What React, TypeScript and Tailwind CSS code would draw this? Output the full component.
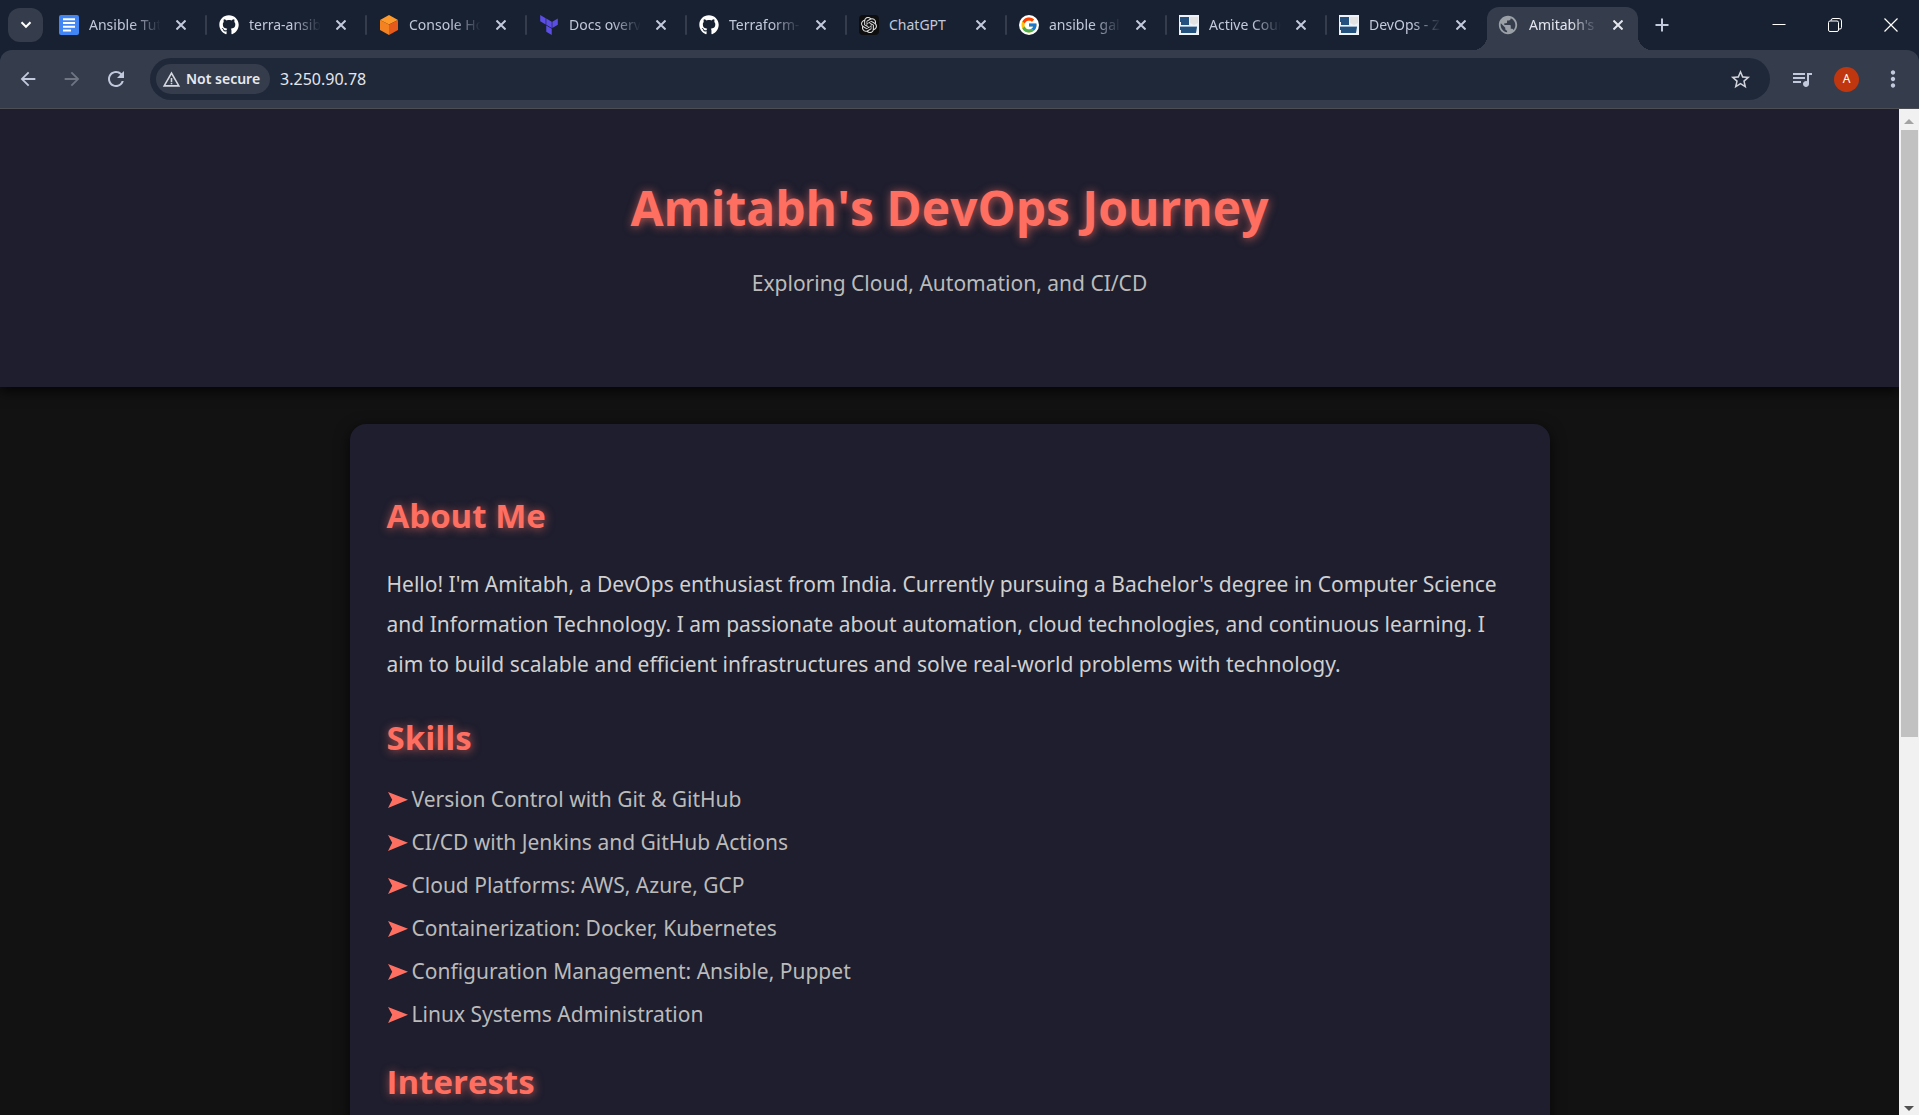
import type { ReactNode } from "react";
import { FaGithub } from "react-icons/fa";
import { FcGoogle } from "react-icons/fc";
import {
  MdArrowBack,
  MdArrowForward,
  MdMoreVert,
  MdPublic,
  MdQueueMusic,
  MdRefresh,
  MdStarBorder,
  MdWarningAmber,
} from "react-icons/md";
import { SiOpenai, SiTerraform } from "react-icons/si";

function DocsIcon() {
  return (
    <svg viewBox="0 0 20 20" className="size-5">
      <rect width="20" height="20" rx="2" fill="#4285f4" />
      <path d="M4 4.2h12M4 8h12M4 11.8h12M4 15.6h8" stroke="#fff" strokeWidth="2" />
    </svg>
  );
}

function ConsoleIcon() {
  return (
    <svg viewBox="0 0 20 20" className="size-5">
      <path d="M10 0l9 5-9 4.6L1 5z" fill="#fd9a2b" />
      <path d="M1 5l9 4.6V20l-9-5z" fill="#f58220" />
      <path d="M19 5l-9 4.6V20l9-5z" fill="#e65a1c" />
    </svg>
  );
}

function CourseIcon() {
  return (
    <svg viewBox="0 0 20 20" className="size-5">
      <rect width="20" height="20" fill="#eef2f6" />
      <path d="M1 2h9v8H2V7H1z" fill="#23507c" />
      <path d="M1 12h17l-1 6H2v-3H1z" fill="#23507c" />
      <path d="M11 2h8v6l-4 2-4-2z" fill="#e2e2e2" />
      <path d="M1 11h17v1H1z" fill="#9db4ca" />
    </svg>
  );
}

function CloseIcon() {
  return (
    <svg viewBox="0 0 10 10" className="size-2.5" fill="none" stroke="currentColor" strokeWidth="2">
      <path d="M0.5 0.5l9 9M9.5 0.5l-9 9" />
    </svg>
  );
}

const tabs: { title: string; icon: ReactNode }[] = [
  { title: "Ansible Tutorial", icon: <DocsIcon /> },
  { title: "terra-ansible", icon: <FaGithub className="size-5 text-white" /> },
  { title: "Console Home", icon: <ConsoleIcon /> },
  { title: "Docs overview", icon: <SiTerraform className="size-5 text-[#5c4ee5]" /> },
  { title: "Terraform-files", icon: <FaGithub className="size-5 text-white" /> },
  {
    title: "ChatGPT",
    icon: (
      <span className="flex size-5 items-center justify-center rounded bg-[#0e0e0e]">
        <SiOpenai className="size-4 text-[#dedede]" />
      </span>
    ),
  },
  {
    title: "ansible galaxy",
    icon: (
      <span className="flex size-5 items-center justify-center rounded-full bg-white">
        <FcGoogle className="size-[18px]" />
      </span>
    ),
  },
  { title: "Active Courses", icon: <CourseIcon /> },
  { title: "DevOps - Zero", icon: <CourseIcon /> },
];

const fade = "[mask-image:linear-gradient(to_right,black_60%,transparent)]";

function TabBody({ title, icon }: { title: string; icon: ReactNode }) {
  return (
    <>
      <button className="flex min-w-0 flex-1 items-center gap-2.5 text-left">
        <span className="shrink-0">{icon}</span>
        <span
          className={`min-w-0 flex-1 overflow-hidden text-sm whitespace-nowrap ${
            title === "ChatGPT" ? "" : fade
          }`}
        >
          {title}
        </span>
      </button>
      <button aria-label={`Close ${title}`} className="ml-2 flex size-6 items-center justify-center">
        <CloseIcon />
      </button>
    </>
  );
}

function TabStrip() {
  return (
    <div className="flex h-[50px] items-stretch bg-[#182131] pl-2 text-[#c3c9dc]">
      <button
        aria-label="Search tabs"
        className="mt-2 mr-1 flex h-[34px] w-[35px] shrink-0 items-center justify-center rounded-xl bg-[#353d4c] text-white"
      >
        <svg viewBox="0 0 12 8" className="h-2 w-3" fill="none" stroke="currentColor" strokeWidth="2">
          <path d="M1.5 1.2L6 5.8l4.500-4.600" />
        </svg>
      </button>
      {tabs.map((tab, i) => (
        <div key={tab.title} className="flex w-40 min-w-0 items-center pl-3">
          <TabBody {...tab} />
          <span
            className={`ml-3 h-5 w-0.5 rounded-full ${
              i === tabs.length - 1 ? "bg-transparent" : "bg-[#353d4c]"
            }`}
          />
        </div>
      ))}
      <div className="relative mt-[7px] flex w-[151px] min-w-0 items-center rounded-t-xl bg-[#353d4d] pr-2 pb-[7px] pl-2.5 text-[#e3e6ee]">
        <TabBody title="Amitabh's DevOps" icon={<MdPublic className="size-[22px] text-[#9aa0a6]" />} />
        <span className="absolute bottom-0 -left-3.5 size-3.5 bg-[radial-gradient(circle_at_0_0,transparent_14px,#353d4d_14px)]" />
        <span className="absolute -right-3.5 bottom-0 size-3.5 bg-[radial-gradient(circle_at_100%_0,transparent_14px,#353d4d_14px)]" />
      </div>
      <button aria-label="New tab" className="ml-2 flex w-8 items-center justify-center">
        <svg viewBox="0 0 14 14" className="size-3.5" stroke="currentColor" strokeWidth="2">
          <path d="M7 0.500v13M0.500 7h13" />
        </svg>
      </button>
      <div className="ml-auto flex text-white">
        <button aria-label="Minimize" className="flex w-14 items-center justify-center">
          <svg viewBox="0 0 14 14" className="size-3.5" stroke="currentColor">
            <path d="M0.500 6.500h13" />
          </svg>
        </button>
        <button aria-label="Restore" className="flex w-14 items-center justify-center">
          <svg viewBox="0 0 14 14" className="size-3.5" fill="none" stroke="currentColor">
            <rect x="0.500" y="3" width="10" height="10.500" rx="1.500" />
            <path d="M3 3V2.500a2 2 0 0 1 2-2h6a2.500 2.500 0 0 1 2.500 2.500v6.500a1.500 1.500 0 0 1-1.500 1.500h-1.500" />
          </svg>
        </button>
        <button aria-label="Close window" className="flex w-14 items-center justify-center">
          <svg viewBox="0 0 14 14" className="size-3.5" stroke="currentColor" strokeWidth="1.200">
            <path d="M0.500 0.500l13 13M13.500 0.500l-13 13" />
          </svg>
        </button>
      </div>
    </div>
  );
}

function Toolbar() {
  return (
    <div className="bg-[#182131]">
      <div className="flex h-[59px] items-center rounded-t-xl border-b border-[#4c4e53] bg-[#353d4d] px-3 text-[#c3c9dc]">
        <button aria-label="Back" className="flex w-8 justify-center">
          <MdArrowBack className="size-[22px]" />
        </button>
        <button aria-label="Forward" className="ml-3 flex w-8 justify-center text-[#6f7583]">
          <MdArrowForward className="size-[22px]" />
        </button>
        <button aria-label="Reload" className="ml-3 flex w-8 justify-center">
          <MdRefresh className="size-6" />
        </button>
        <div className="ml-[18px] flex h-[42px] flex-1 items-center rounded-full bg-[#1f2838] px-1.5">
          <button className="flex h-[30px] items-center gap-[5px] rounded-full bg-[#353d4c] pr-2.5 pl-1.5 text-sm font-semibold text-[#e8eaf0]">
            <MdWarningAmber className="size-[19px] text-[#d5d8e0]" />
            Not secure
          </button>
          <input
            aria-label="Address"
            defaultValue="3.250.90.78"
            className="ml-2.5 min-w-0 flex-1 bg-transparent text-base text-[#e3e6ec] outline-none"
          />
          <button aria-label="Bookmark this page" className="mr-3 flex size-6 items-center justify-center text-[#d0d3da]">
            <MdStarBorder className="size-[23px]" />
          </button>
        </div>
        <button aria-label="Media controls" className="ml-5 flex w-6 justify-center">
          <MdQueueMusic className="size-6" />
        </button>
        <button
          aria-label="Profile"
          className="ml-5 flex size-[25px] items-center justify-center rounded-full bg-[#c0370f] text-xs text-white"
        >
          A
        </button>
        <button aria-label="Menu" className="ml-5 flex size-7 items-center justify-center">
          <MdMoreVert className="size-[26px]" />
        </button>
      </div>
    </div>
  );
}

const skills = [
  "Version Control with Git & GitHub",
  "CI/CD with Jenkins and GitHub Actions",
  "Cloud Platforms: AWS, Azure, GCP",
  "Containerization: Docker, Kubernetes",
  "Configuration Management: Ansible, Puppet",
  "Linux Systems Administration",
];

const heading =
  "font-['Open_Sans',sans-serif] font-bold text-[#ff6f61] [text-shadow:1px_1px_10px_rgba(255,111,97,0.7)]";

function Heading({ children }: { children: ReactNode }) {
  return <h2 className={`text-[33px] leading-12 ${heading}`}>{children}</h2>;
}

function Page() {
  return (
    <main className="min-w-0 flex-1 overflow-hidden bg-[#121212]">
      <header className="bg-[#1e1e2e] pt-[63px] pb-[84px] text-center shadow-[0_4px_12px_rgba(0,0,0,0.8)]">
        <h1 className={`text-5xl leading-[72px] ${heading}`}>Amitabh's DevOps Journey</h1>
        <p className="mt-[19px] text-[21px] leading-10 text-[#bbbbbb]">Exploring Cloud, Automation, and CI/CD</p>
      </header>
      <div className="mx-auto mt-[37px] max-w-[1200px] rounded-2xl bg-[#1e1e2e] px-[37px] pt-[68px] pb-10 shadow-[0_4px_15px_rgba(0,0,0,0.7)]">
        <section>
          <Heading>About Me</Heading>
          <p className="mt-6 text-[21px] leading-10 text-[#d0d0d0]">
            Hello! I'm Amitabh, a DevOps enthusiast from India. Currently pursuing a Bachelor's degree in Computer
            Science and Information Technology. I am passionate about automation, cloud technologies, and continuous
            learning. I aim to build scalable and efficient infrastructures and solve real-world problems with
            technology.
          </p>
        </section>
        <section className="mt-[30px]">
          <Heading>Skills</Heading>
          <ul className="mt-4 text-[21px] leading-[43px] text-[#bbbbbb]">
            {skills.map((skill) => (
              <li key={skill} className="flex items-center">
                <svg viewBox="0 0 20 16" className="mr-1 ml-px h-4 w-5 shrink-0" fill="#ff6f61" aria-hidden="true">
                  <path d="M0 0l20 7.800L0 16l4.200-8.200z" />
                </svg>
                {skill}
              </li>
            ))}
          </ul>
        </section>
        <section className="mt-[22px]">
          <Heading>Interests</Heading>
        </section>
      </div>
    </main>
  );
}

function ScrollBar() {
  return (
    <div className="flex w-5 shrink-0 flex-col items-center bg-[#f1f1f1]" aria-hidden="true">
      <div className="flex h-[21px] items-center pt-1">
        <svg viewBox="0 0 10 5" className="h-[5px] w-2.5" fill="#a3a3a3">
          <path d="M5 0l5 5H0z" />
        </svg>
      </div>
      <div className="flex min-h-0 w-full flex-1 pl-0.5">
        <div className="h-[63%] w-[17px] bg-[#c1c1c1]" />
      </div>
      <div className="flex h-[21px] items-center pt-2">
        <svg viewBox="0 0 10 5" className="h-[5px] w-2.5" fill="#505050">
          <path d="M5 5l5-5H0z" />
        </svg>
      </div>
    </div>
  );
}

export default function App() {
  return (
    <div className="flex h-screen flex-col overflow-hidden font-['Noto_Sans',sans-serif]">
      <TabStrip />
      <Toolbar />
      <div className="flex min-h-0 flex-1">
        <Page />
        <ScrollBar />
      </div>
    </div>
  );
}
